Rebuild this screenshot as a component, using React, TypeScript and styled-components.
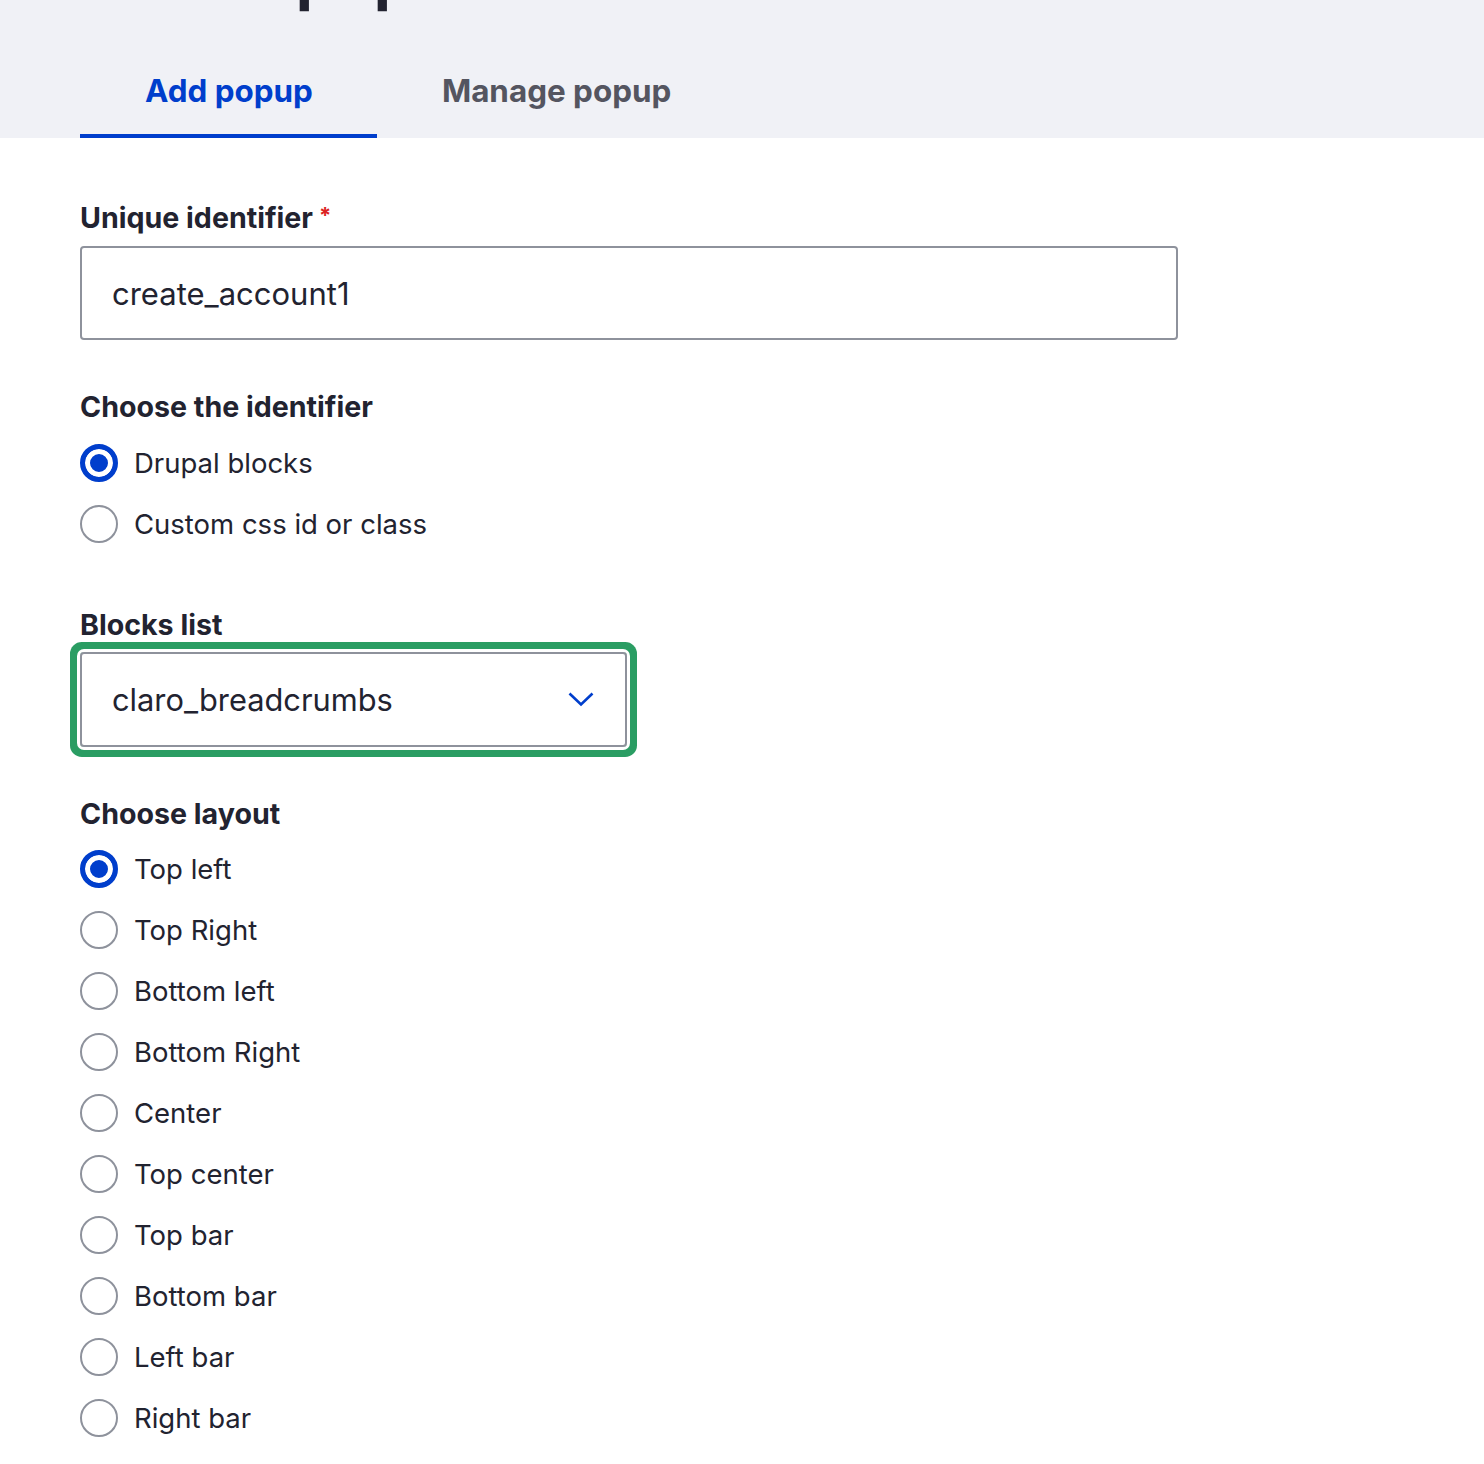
import styled, { createGlobalStyle } from 'styled-components';

const GlobalStyle = createGlobalStyle`
  html, body {
    margin: 0;
    padding: 0;
    background: #fff;
  }
  body {
    font-family: Inter, "Noto Sans", "Liberation Sans", sans-serif;
    color: #222330;
  }
`;

const PageHeader = styled.header`
  background-color: #f0f1f6;
  padding: 0 80px;
  overflow: hidden;
`;

const Title = styled.h1`
  margin: -63px 0 0;
  font-size: 63px;
  line-height: 76px;
  font-weight: 700;
  letter-spacing: -0.5px;
  white-space: nowrap;
`;

const Tabs = styled.nav`
  display: flex;
  margin-top: 30px;
`;

const Tab = styled.a<{ $active?: boolean }>`
  display: flex;
  align-items: center;
  height: 95px;
  padding: 4px 64px 0 65px;
  box-sizing: border-box;
  font-size: 31.4px;
  font-weight: 700;
  text-decoration: none;
  color: ${(p) => (p.$active ? '#003ecc' : '#545560')};
  border-bottom: 4px solid ${(p) => (p.$active ? '#003ecc' : 'transparent')};
  cursor: pointer;
`;

const Form = styled.form`
  display: flex;
  flex-direction: column;
  padding: 59px 80px 40px;
`;

const Field = styled.div<{ $gap?: number }>`
  display: flex;
  flex-direction: column;
  margin-bottom: ${(p) => p.$gap ?? 49}px;
`;

const Label = styled.label<{ $below?: number }>`
  display: block;
  font-size: 28.6px;
  line-height: 36px;
  font-weight: 700;
  margin-bottom: ${(p) => p.$below ?? 10}px;
`;

const Required = styled.span`
  color: #dc2323;
  font-size: 22px;
  margin-left: 6px;
  vertical-align: 5px;
`;

const TextInput = styled.input`
  width: 1098px;
  height: 94px;
  box-sizing: border-box;
  border: 2px solid #8e929c;
  border-radius: 4px;
  padding: 0 30px;
  font-family: inherit;
  font-size: 31px;
  color: #222330;
  outline: none;
`;

const SelectBox = styled.div`
  display: flex;
  align-items: center;
  justify-content: space-between;
  width: 547px;
  height: 95px;
  box-sizing: border-box;
  border: 2px solid #8e929c;
  border-radius: 4px;
  padding: 0 31px 0 30px;
  font-size: 30.8px;
  box-shadow: 0 0 0 3px #fff, 0 0 0 10px #2a9d63;
`;

const RadioList = styled.div`
  display: flex;
  flex-direction: column;
  gap: 23px;
`;

const RadioRow = styled.label`
  display: flex;
  align-items: center;
  gap: 16px;
  height: 38px;
  font-size: 27.5px;
  cursor: pointer;
`;

const RadioDot = styled.span<{ $checked?: boolean }>`
  width: 38px;
  height: 38px;
  box-sizing: border-box;
  border-radius: 50%;
  flex-shrink: 0;
  ${(p) =>
    p.$checked
      ? `border: 5px solid #003ecc; background: #003ecc; box-shadow: inset 0 0 0 5px #fff;`
      : `border: 2px solid #8e929c; background: #fff;`}
`;

const Radio = ({ label, checked }: { label: string; checked?: boolean }) => (
  <RadioRow>
    <RadioDot $checked={checked} />
    {label}
  </RadioRow>
);

const layouts = [
  'Top left',
  'Top Right',
  'Bottom left',
  'Bottom Right',
  'Center',
  'Top center',
  'Top bar',
  'Bottom bar',
  'Left bar',
  'Right bar',
];

export default function App() {
  return (
    <>
      <GlobalStyle />
      <PageHeader>
        <Title>Add Popup Blocks</Title>
        <Tabs>
          <Tab $active>Add popup</Tab>
          <Tab>Manage popup</Tab>
        </Tabs>
      </PageHeader>
      <Form>
        <Field>
          <Label>
            Unique identifier<Required>*</Required>
          </Label>
          <TextInput defaultValue="create_account1" />
        </Field>
        <Field $gap={64}>
          <Label $below={19}>Choose the identifier</Label>
          <RadioList>
            <Radio label="Drupal blocks" checked />
            <Radio label="Custom css id or class" />
          </RadioList>
        </Field>
        <Field>
          <Label $below={9}>Blocks list</Label>
          <SelectBox>
            claro_breadcrumbs
            <svg width="26" height="15" viewBox="0 0 26 15" fill="none">
              <polyline points="1.5,1.5 13,12.5 24.5,1.5" stroke="#003ecc" strokeWidth="2.6" />
            </svg>
          </SelectBox>
        </Field>
        <Field $gap={0}>
          <Label $below={18}>Choose layout</Label>
          <RadioList>
            {layouts.map((l, i) => (
              <Radio key={l} label={l} checked={i === 0} />
            ))}
          </RadioList>
        </Field>
      </Form>
    </>
  );
}
